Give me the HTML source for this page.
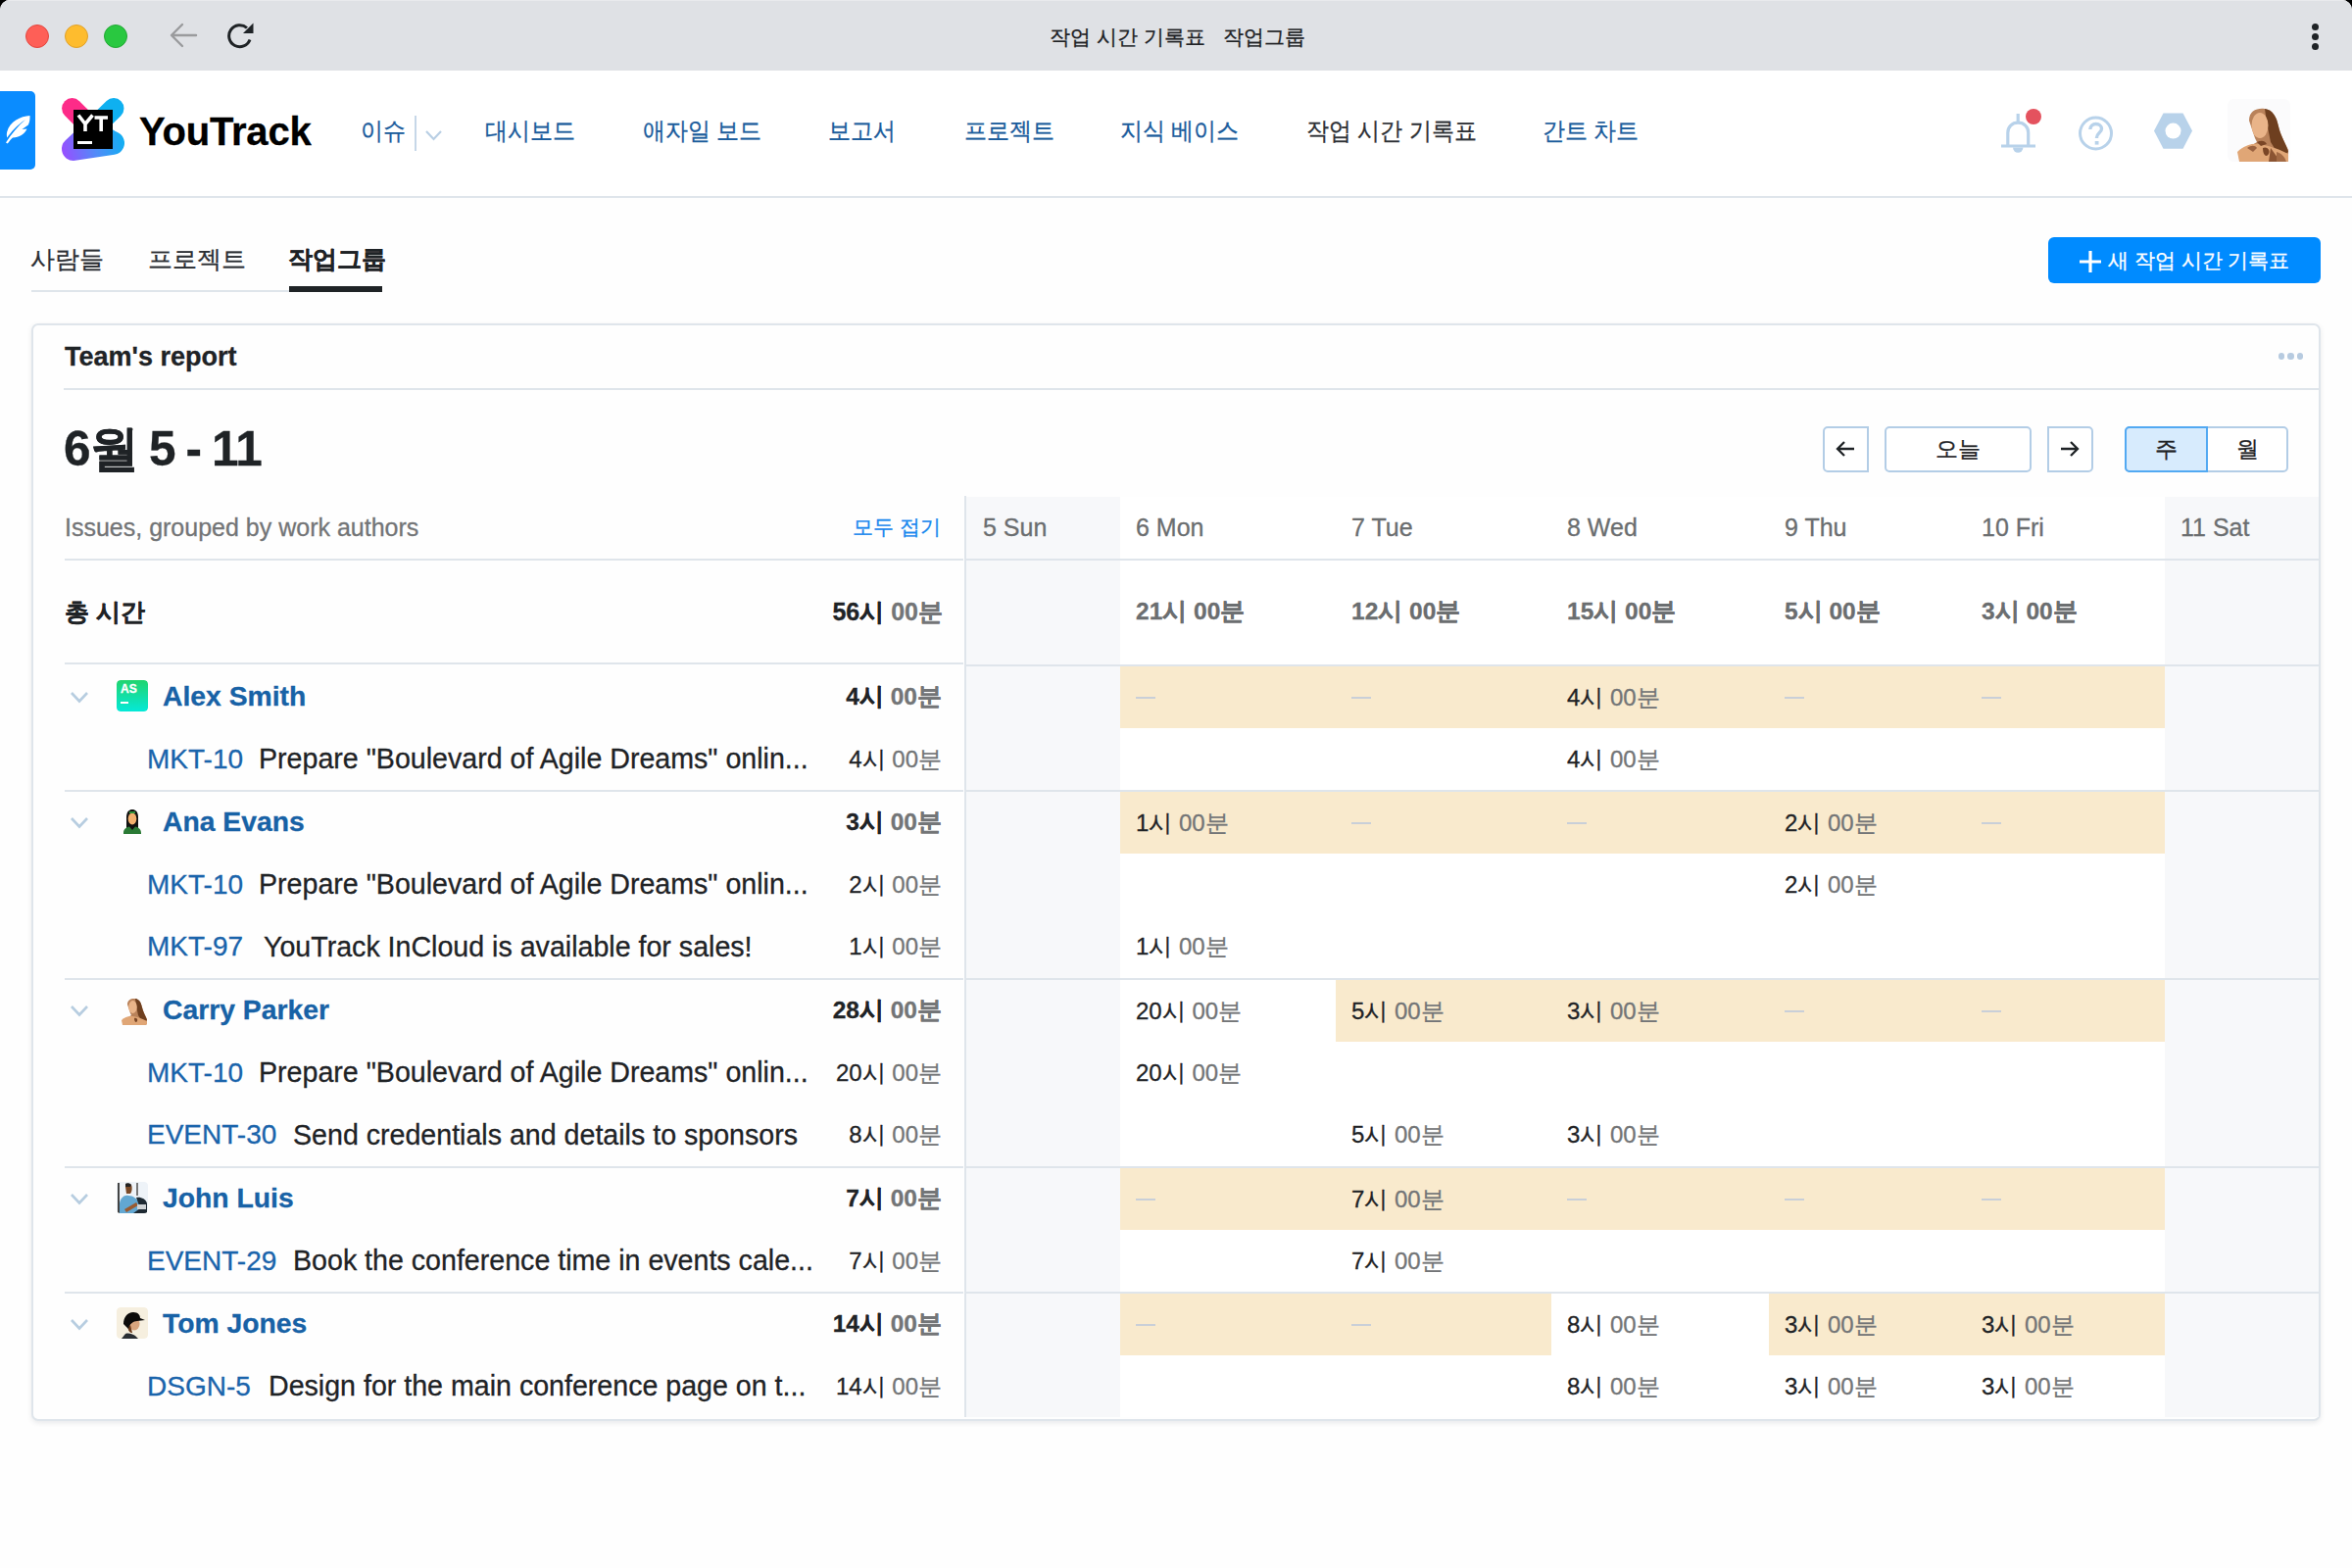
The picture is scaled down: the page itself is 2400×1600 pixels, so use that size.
<!DOCTYPE html>
<html><head><meta charset="utf-8">
<style>
*{box-sizing:border-box;margin:0;padding:0}
html,body{width:2400px;height:1600px;overflow:hidden;background:#000}
body{font-family:"Liberation Sans",sans-serif;color:#1f2326;position:relative;-webkit-text-stroke:0.3px currentColor}
.a{position:absolute;white-space:pre}
#win{position:absolute;left:0;top:0;width:2400px;height:1600px;background:#fefefe;border-radius:10px 10px 0 0;overflow:hidden}
#chrome{position:absolute;left:0;top:0;width:2400px;height:72px;background:#dfe1e5;box-shadow:inset 0 1px 0 #e9eaed}
.tl{position:absolute;top:25px;width:24px;height:24px;border-radius:50%}
.nav{font-size:25px;color:#1b5c9c;top:116px;line-height:34px;transform:scaleX(0.92);transform-origin:0 50%}
.tab{font-size:24.5px;color:#2b2e33;top:248px;line-height:34px}
.line{position:absolute;background:#dfe5eb}
</style></head><body>
<div id="win">
  <div id="chrome">
    <div class="tl" style="left:26px;background:#fe5f57;border:1px solid #e2463f"></div>
    <div class="tl" style="left:66px;background:#febc2e;border:1px solid #e0a12a"></div>
    <div class="tl" style="left:106px;background:#29c840;border:1px solid #22a834"></div>
    <svg class="a" style="left:172px;top:21px" width="32" height="30" viewBox="0 0 32 30"><path d="M28 15H4M14 4L3 15L14 26" fill="none" stroke="#9a9b9d" stroke-width="2.4" stroke-linecap="round" stroke-linejoin="round"/></svg>
    <svg class="a" style="left:230px;top:21px" width="32" height="30" viewBox="0 0 32 30"><path d="M25 19.5A11 11 0 1 1 22 7.5" fill="none" stroke="#1f2326" stroke-width="3"/><path d="M28.5 2.5V13H18z" fill="#1f2326"/></svg>
    <div class="a" style="left:1071px;top:23px;font-size:21px;line-height:30px;color:#202124">작업 시간 기록표</div>
    <div class="a" style="left:1248px;top:23px;font-size:21px;line-height:30px;color:#202124">작업그룹</div>
    <div class="a" style="left:2358.5px;top:23.5px;width:7px;height:7px;border-radius:50%;background:#1f2326"></div>
    <div class="a" style="left:2358.5px;top:33.5px;width:7px;height:7px;border-radius:50%;background:#1f2326"></div>
    <div class="a" style="left:2358.5px;top:43.5px;width:7px;height:7px;border-radius:50%;background:#1f2326"></div>
  </div>
  <!-- HEADER -->
  <div class="a" style="left:0;top:72px;width:2400px;height:128px;background:#fff"></div>
  <div class="line" style="left:0;top:200px;width:2400px;height:2px"></div>
  <div class="a" style="left:0;top:93px;width:36px;height:80px;background:#0a8cff;border-radius:0 5px 5px 0"></div>
  <svg class="a" style="left:4px;top:116px" width="30" height="32" viewBox="0 0 30 32">
  <path d="M26.5 2C17 2.5 6 8 3.2 18.5C2.6 21 2.8 23 3.4 24.5C7 19 13 12 22 6C14.5 12.5 8 20 2 29.5L3.8 30.5C6 27.5 7.5 25.8 9 24.5C15.5 24.5 21 21 23.5 15.5L18.5 16L24.8 11.5C26.3 8.5 26.8 5 26.5 2Z" fill="#fff"/>
</svg>
  <svg class="a" style="left:58px;top:95px" width="74" height="74" viewBox="0 0 74 74">
  <defs><linearGradient id="lg" x1="5" y1="65" x2="68" y2="50" gradientUnits="userSpaceOnUse"><stop offset="0" stop-color="#9b4cff"/><stop offset="0.55" stop-color="#4f8cf8"/><stop offset="1" stop-color="#13aef2"/></linearGradient></defs>
  <path d="M15.6 15.6L30 30" stroke="#fd2b88" stroke-width="21" stroke-linecap="round"/>
  <path d="M58 15.6L38 35L57 51" fill="none" stroke="#0fb0f0" stroke-width="21" stroke-linecap="round" stroke-linejoin="round"/>
  <path d="M17 57L35 40L57 51Z" fill="url(#lg)" stroke="url(#lg)" stroke-width="24" stroke-linejoin="round"/>
  <rect x="17" y="17" width="40" height="40" fill="#000"/>
  <path d="M22 22.5L29 31.5V39M36.5 22.5L29 31.5M38.5 25H52M45.2 25V39" fill="none" stroke="#fff" stroke-width="3.6"/>
  <rect x="21" y="49" width="15" height="3" fill="#fff"/>
</svg>
  <div class="a" style="left:142px;top:110px;font-size:40px;font-weight:bold;line-height:48px;color:#000;letter-spacing:-0.2px">YouTrack</div>
  <div class="a nav" style="left:368px">이슈</div>
  <div class="a" style="left:423px;top:118px;width:2px;height:36px;background:#c6d7e8"></div>
  <svg class="a" style="left:433px;top:131px" width="19" height="14" viewBox="0 0 19 14"><path d="M2 3L9.5 11L17 3" fill="none" stroke="#b9cfe4" stroke-width="2.2"/></svg>
  <div class="a nav" style="left:495px">대시보드</div>
  <div class="a nav" style="left:656px">애자일 보드</div>
  <div class="a nav" style="left:845px">보고서</div>
  <div class="a nav" style="left:984px">프로젝트</div>
  <div class="a nav" style="left:1143px">지식 베이스</div>
  <div class="a nav" style="left:1333px;color:#2d3035">작업 시간 기록표</div>
  <div class="a nav" style="left:1574px">간트 차트</div>
  <svg class="a" style="left:2038px;top:110px" width="52" height="50" viewBox="0 0 52 50">
  <path d="M21.2 6V15M4 39H39M10.8 38V25.5C10.8 19.5 15 15.2 21.2 15.2C27.4 15.2 31.7 19.5 31.7 25.5V38" fill="none" stroke="#b8d2ea" stroke-width="3.2"/>
  <path d="M16 40.5A5.2 5.2 0 0 0 26.4 40.5Z" fill="#b8d2ea"/>
  <circle cx="37" cy="9" r="8" fill="#e4525e"/>
</svg>
<svg class="a" style="left:2119px;top:116px" width="40" height="40" viewBox="0 0 40 40">
  <circle cx="19.5" cy="20" r="16" fill="none" stroke="#b8d2ea" stroke-width="3"/>
  <path d="M13.8 16C14 12.5 16.5 10.5 19.7 10.5C23 10.5 25.5 12.7 25.5 15.5C25.5 19 20.5 20 20.5 24.5V25" fill="none" stroke="#b8d2ea" stroke-width="3.4"/>
  <rect x="18.7" y="28" width="3.8" height="3.6" fill="#b8d2ea"/>
</svg>
<svg class="a" style="left:2196px;top:113px" width="44" height="42" viewBox="0 0 44 42">
  <path d="M2 20.6L11.5 2.5H31.5L41 20.6L31.5 38.8H11.5Z" fill="#b8d2ea"/>
  <circle cx="21.5" cy="20.6" r="8" fill="#fff"/>
</svg>
<svg class="a" style="left:2273px;top:101px" width="64" height="64" viewBox="0 0 64 64">
  <rect x="0" y="0" width="64" height="64" rx="6" fill="#fbfbfc"/>
  <path d="M22 22C22 12 30 9 38 10C46 11 50 18 52 28C54 36 58 44 62 52V64H16V56C20 50 26 46 30 44L28 40Z" fill="#b9825a"/>
  <path d="M38 10C46 11 50 18 52 28C54 38 60 46 62 54L54 60L44 44L40 24Z" fill="#6e3f1f"/>
  <ellipse cx="33" cy="27" rx="8.5" ry="13" fill="#e9b489"/>
  <path d="M10 54C16 48 24 45 32 46C40 47 50 50 62 56V64H12Z" fill="#e0a676"/>
  <path d="M36 50C40 48 44 52 42 56C40 60 36 58 36 50Z" fill="#7a4626"/>
  <path d="M44 50L54 64H42Z" fill="#8b5432"/><path d="M20 50C24 47 28 47 30 50L26 54Z" fill="#9a6240"/><path d="M50 54C54 55 58 58 60 64H50Z" fill="#a46b45"/><path d="M30 44C34 42 38 42 40 46L34 48Z" fill="#7a4626"/>
</svg>
  <!-- TABS -->
  <div class="a tab" style="left:31px">사람들</div>
  <div class="a tab" style="left:151px">프로젝트</div>
  <div class="a tab" style="left:294px;font-weight:bold;color:#1f2326">작업그룹</div>
  <div class="line" style="left:32px;top:296px;width:263px;height:2px"></div>
  <div class="a" style="left:295px;top:292px;width:95px;height:6px;background:#1f2326"></div>
  <div class="a" style="left:2090px;top:242px;width:278px;height:47px;background:#008bff;border-radius:6px"></div>
  <svg class="a" style="left:2121px;top:255px" width="24" height="24" viewBox="0 0 24 24"><path d="M12 1V23M1 12H23" stroke="#fff" stroke-width="3.2"/></svg>
  <div class="a" style="left:2151px;top:249px;font-size:20.8px;line-height:34px;color:#fff">새 작업 시간 기록표</div>
  <!-- CARD -->
<div class="a" style="left:32px;top:330px;width:2336px;height:1120px;border:2px solid #dfe5eb;border-radius:7px;background:#fefefe;box-shadow:0 2px 5px rgba(40,50,70,0.10)"></div>
<div class="a" style="left:66px;top:340px;line-height:48px;font-size:27px;color:#1f2326;font-weight:bold;">Team's report</div>
<div class="a" style="left:2324.5px;top:360px;width:6.5px;height:6.5px;border-radius:50%;background:#b7cbe0"></div>
<div class="a" style="left:2334.0px;top:360px;width:6.5px;height:6.5px;border-radius:50%;background:#b7cbe0"></div>
<div class="a" style="left:2343.5px;top:360px;width:6.5px;height:6.5px;border-radius:50%;background:#b7cbe0"></div>
<div class="a" style="left:65px;top:396px;width:2301px;height:2px;background:#dfe5eb"></div>
<div class="a" style="left:65px;top:428px;line-height:60px;font-size:49.5px;color:#1f2326;font-weight:bold;letter-spacing:-0.6px;word-spacing:-2.5px">6월 5 - 11</div>
<div class="a" style="left:1860px;top:435px;width:47px;height:47px;border:2px solid #b3cde6;border-radius:5px 0 0 5px;background:#fff"></div>
<svg class="a" style="left:1872px;top:448px" width="22" height="20" viewBox="0 0 22 20"><path d="M20 10H3M10 3L3 10L10 17" fill="none" stroke="#1f2326" stroke-width="2.3"/></svg>
<div class="a" style="left:1923px;top:435px;width:150px;height:47px;border:2px solid #b3cde6;border-radius:5px;background:#fff"></div>
<div class="a" style="left:1923px;top:435px;line-height:47px;font-size:23px;color:#1f2326;width:150px;text-align:center">오늘</div>
<div class="a" style="left:2089px;top:435px;width:47px;height:47px;border:2px solid #b3cde6;border-radius:0 5px 5px 0;background:#fff"></div>
<svg class="a" style="left:2101px;top:448px" width="22" height="20" viewBox="0 0 22 20"><path d="M2 10H19M12 3L19 10L12 17" fill="none" stroke="#1f2326" stroke-width="2.3"/></svg>
<div class="a" style="left:2168px;top:435px;width:167px;height:47px;border:2px solid #b3cde6;border-radius:5px;background:#fff"></div>
<div class="a" style="left:2168px;top:435px;width:85px;height:47px;border:2px solid #52a9f2;border-radius:5px 0 0 5px;background:#d7ebfd"></div>
<div class="a" style="left:2168px;top:435px;line-height:47px;font-size:23px;color:#1f2326;width:85px;text-align:center">주</div>
<div class="a" style="left:2252px;top:435px;line-height:47px;font-size:23px;color:#1f2326;width:83px;text-align:center">월</div>
<div class="a" style="left:986px;top:507px;width:157px;height:939px;background:#f7f8fa"></div>
<div class="a" style="left:2209px;top:507px;width:157px;height:939px;background:#f7f8fa"></div>
<div class="a" style="left:1143px;top:507px;width:1066px;height:939px;background:#fff"></div>
<div class="a" style="left:984px;top:506px;width:2px;height:940px;background:#dfe5eb"></div>
<div class="a" style="left:66px;top:518px;line-height:40px;font-size:25px;color:#737577;">Issues, grouped by work authors</div>
<div class="a" style="right:1440px;top:518px;line-height:40px;font-size:21.3px;color:#1787ee;text-align:right;">모두 접기</div>
<div class="a" style="left:1003px;top:518px;line-height:40px;font-size:25px;color:#6b6e70;">5 Sun</div>
<div class="a" style="left:1159px;top:518px;line-height:40px;font-size:25px;color:#6b6e70;">6 Mon</div>
<div class="a" style="left:1379px;top:518px;line-height:40px;font-size:25px;color:#6b6e70;">7 Tue</div>
<div class="a" style="left:1599px;top:518px;line-height:40px;font-size:25px;color:#6b6e70;">8 Wed</div>
<div class="a" style="left:1821px;top:518px;line-height:40px;font-size:25px;color:#6b6e70;">9 Thu</div>
<div class="a" style="left:2022px;top:518px;line-height:40px;font-size:25px;color:#6b6e70;">10 Fri</div>
<div class="a" style="left:2225px;top:518px;line-height:40px;font-size:25px;color:#6b6e70;">11 Sat</div>
<div class="a" style="left:66px;top:570px;width:917px;height:2px;background:#dfe5eb"></div>
<div class="a" style="left:986px;top:570px;width:1380px;height:2px;background:#dfe5eb"></div>
<div class="a" style="left:66px;top:600px;line-height:48px;font-size:25px;color:#1f2326;font-weight:bold;">총 시간</div>
<div class="a" style="right:1438px;top:600px;line-height:48px;font-size:25px;color:#1f2326;font-weight:bold;text-align:right;">56시 <span style="color:#737577">00분</span></div>
<div class="a" style="left:1159px;top:600px;line-height:48px;font-size:24.5px;color:#6b6e70;font-weight:bold;">21시 00분</div>
<div class="a" style="left:1379px;top:600px;line-height:48px;font-size:24.5px;color:#6b6e70;font-weight:bold;">12시 00분</div>
<div class="a" style="left:1599px;top:600px;line-height:48px;font-size:24.5px;color:#6b6e70;font-weight:bold;">15시 00분</div>
<div class="a" style="left:1821px;top:600px;line-height:48px;font-size:24.5px;color:#6b6e70;font-weight:bold;">5시 00분</div>
<div class="a" style="left:2022px;top:600px;line-height:48px;font-size:24.5px;color:#6b6e70;font-weight:bold;">3시 00분</div>
<div class="a" style="left:66px;top:676px;width:917px;height:2px;background:#dfe5eb"></div>
<div class="a" style="left:986px;top:678px;width:1380px;height:2px;background:#dfe5eb"></div>
<div class="a" style="left:1143px;top:680px;width:220px;height:63px;background:#f9eacd"></div>
<div class="a" style="left:1363px;top:680px;width:220px;height:63px;background:#f9eacd"></div>
<div class="a" style="left:1583px;top:680px;width:222px;height:63px;background:#f9eacd"></div>
<div class="a" style="left:1805px;top:680px;width:201px;height:63px;background:#f9eacd"></div>
<div class="a" style="left:2006px;top:680px;width:203px;height:63px;background:#f9eacd"></div>
<svg class="a" style="left:71px;top:705px" width="20" height="13" viewBox="0 0 20 13"><path d="M2 2L10 10.5L18 2" fill="none" stroke="#b7cde0" stroke-width="2.6"/></svg>
<div class="a avatar0" style="left:119px;top:694px;width:32px;height:32px;border-radius:4px;overflow:hidden"><div class="a" style="left:0;top:0;width:32px;height:32px;border-radius:4px;background:linear-gradient(180deg,#21d46e,#04e9d8)"></div><div class="a" style="left:4px;top:1px;font-size:12px;line-height:16px;font-weight:bold;color:#fff">AS</div><div class="a" style="left:4px;top:22px;width:8px;height:2px;background:#fff"></div></div>
<div class="a" style="left:166px;top:679px;line-height:63px;font-size:28.3px;color:#1862a6;font-weight:bold;">Alex Smith</div>
<div class="a" style="right:1439px;top:679px;line-height:63px;font-size:24.5px;color:#1f2326;font-weight:bold;text-align:right;">4시 <span style="color:#737577">00분</span></div>
<div class="a" style="left:1159px;top:711px;width:20px;height:2px;background:#c9cfd8"></div>
<div class="a" style="left:1379px;top:711px;width:20px;height:2px;background:#c9cfd8"></div>
<div class="a" style="left:1599px;top:680px;line-height:63px;font-size:24px;color:#1f2326;">4시 <span style="color:#737577">00분</span></div>
<div class="a" style="left:1821px;top:711px;width:20px;height:2px;background:#c9cfd8"></div>
<div class="a" style="left:2022px;top:711px;width:20px;height:2px;background:#c9cfd8"></div>
<div class="a" style="left:150px;top:743px;line-height:63px;font-size:28px;color:#1a64ab;">MKT-10</div>
<div class="a" style="left:264px;top:743px;line-height:63px;font-size:28.6px;color:#1f2326;">Prepare "Boulevard of Agile Dreams" onlin...</div>
<div class="a" style="right:1439px;top:743px;line-height:63px;font-size:24px;color:#1f2326;text-align:right;">4시 <span style="color:#737577">00분</span></div>
<div class="a" style="left:1599px;top:743px;line-height:63px;font-size:24px;color:#1f2326;">4시 <span style="color:#737577">00분</span></div>
<div class="a" style="left:66px;top:806px;width:917px;height:2px;background:#dfe5eb"></div>
<div class="a" style="left:986px;top:806px;width:1380px;height:2px;background:#dfe5eb"></div>
<div class="a" style="left:1143px;top:808px;width:220px;height:63px;background:#f9eacd"></div>
<div class="a" style="left:1363px;top:808px;width:220px;height:63px;background:#f9eacd"></div>
<div class="a" style="left:1583px;top:808px;width:222px;height:63px;background:#f9eacd"></div>
<div class="a" style="left:1805px;top:808px;width:201px;height:63px;background:#f9eacd"></div>
<div class="a" style="left:2006px;top:808px;width:203px;height:63px;background:#f9eacd"></div>
<svg class="a" style="left:71px;top:833px" width="20" height="13" viewBox="0 0 20 13"><path d="M2 2L10 10.5L18 2" fill="none" stroke="#b7cde0" stroke-width="2.6"/></svg>
<div class="a avatar1" style="left:119px;top:822px;width:32px;height:32px;border-radius:4px;overflow:hidden"><svg class="a" style="left:0;top:0" width="32" height="32" viewBox="0 0 32 32"><path d="M10 26V12C10 6 13 4 16 4C19 4 22 6 22 12V26Z" fill="#111"/><ellipse cx="16" cy="13.5" rx="4.3" ry="6" fill="#f2b06e"/><path d="M7 28C7 24 10 22 13 21.5L16 25L19 21.5C22 22 25 24 25 28V29H7Z" fill="#2a7a35"/><rect x="13" y="6" width="6" height="2" fill="#2f8f3a"/></svg></div>
<div class="a" style="left:166px;top:807px;line-height:63px;font-size:28.3px;color:#1862a6;font-weight:bold;">Ana Evans</div>
<div class="a" style="right:1439px;top:807px;line-height:63px;font-size:24.5px;color:#1f2326;font-weight:bold;text-align:right;">3시 <span style="color:#737577">00분</span></div>
<div class="a" style="left:1159px;top:808px;line-height:63px;font-size:24px;color:#1f2326;">1시 <span style="color:#737577">00분</span></div>
<div class="a" style="left:1379px;top:839px;width:20px;height:2px;background:#c9cfd8"></div>
<div class="a" style="left:1599px;top:839px;width:20px;height:2px;background:#c9cfd8"></div>
<div class="a" style="left:1821px;top:808px;line-height:63px;font-size:24px;color:#1f2326;">2시 <span style="color:#737577">00분</span></div>
<div class="a" style="left:2022px;top:839px;width:20px;height:2px;background:#c9cfd8"></div>
<div class="a" style="left:150px;top:871px;line-height:63px;font-size:28px;color:#1a64ab;">MKT-10</div>
<div class="a" style="left:264px;top:871px;line-height:63px;font-size:28.6px;color:#1f2326;">Prepare "Boulevard of Agile Dreams" onlin...</div>
<div class="a" style="right:1439px;top:871px;line-height:63px;font-size:24px;color:#1f2326;text-align:right;">2시 <span style="color:#737577">00분</span></div>
<div class="a" style="left:1821px;top:871px;line-height:63px;font-size:24px;color:#1f2326;">2시 <span style="color:#737577">00분</span></div>
<div class="a" style="left:150px;top:934px;line-height:64px;font-size:28px;color:#1a64ab;">MKT-97</div>
<div class="a" style="left:269px;top:934px;line-height:64px;font-size:28.6px;color:#1f2326;">YouTrack InCloud is available for sales!</div>
<div class="a" style="right:1439px;top:934px;line-height:64px;font-size:24px;color:#1f2326;text-align:right;">1시 <span style="color:#737577">00분</span></div>
<div class="a" style="left:1159px;top:934px;line-height:64px;font-size:24px;color:#1f2326;">1시 <span style="color:#737577">00분</span></div>
<div class="a" style="left:66px;top:998px;width:917px;height:2px;background:#dfe5eb"></div>
<div class="a" style="left:986px;top:998px;width:1380px;height:2px;background:#dfe5eb"></div>
<div class="a" style="left:1363px;top:1000px;width:220px;height:63px;background:#f9eacd"></div>
<div class="a" style="left:1583px;top:1000px;width:222px;height:63px;background:#f9eacd"></div>
<div class="a" style="left:1805px;top:1000px;width:201px;height:63px;background:#f9eacd"></div>
<div class="a" style="left:2006px;top:1000px;width:203px;height:63px;background:#f9eacd"></div>
<svg class="a" style="left:71px;top:1025px" width="20" height="13" viewBox="0 0 20 13"><path d="M2 2L10 10.5L18 2" fill="none" stroke="#b7cde0" stroke-width="2.6"/></svg>
<div class="a avatar2" style="left:119px;top:1014px;width:32px;height:32px;border-radius:4px;overflow:hidden"><svg class="a" style="left:0;top:0" width="32" height="32" viewBox="0 0 64 64"><path d="M22 22C22 12 30 9 38 10C46 11 50 18 52 28C54 36 58 44 62 52V64H16V56C20 50 26 46 30 44L28 40Z" fill="#b9825a"/><path d="M38 10C46 11 50 18 52 28C54 38 60 46 62 54L54 60L44 44L40 24Z" fill="#6e3f1f"/><ellipse cx="33" cy="27" rx="8.5" ry="13" fill="#e9b489"/><path d="M10 54C16 48 24 45 32 46C40 47 50 50 62 56V64H12Z" fill="#e0a676"/><path d="M36 50C40 48 44 52 42 56C40 60 36 58 36 50Z" fill="#7a4626"/></svg></div>
<div class="a" style="left:166px;top:999px;line-height:63px;font-size:28.3px;color:#1862a6;font-weight:bold;">Carry Parker</div>
<div class="a" style="right:1439px;top:999px;line-height:63px;font-size:24.5px;color:#1f2326;font-weight:bold;text-align:right;">28시 <span style="color:#737577">00분</span></div>
<div class="a" style="left:1159px;top:1000px;line-height:63px;font-size:24px;color:#1f2326;">20시 <span style="color:#737577">00분</span></div>
<div class="a" style="left:1379px;top:1000px;line-height:63px;font-size:24px;color:#1f2326;">5시 <span style="color:#737577">00분</span></div>
<div class="a" style="left:1599px;top:1000px;line-height:63px;font-size:24px;color:#1f2326;">3시 <span style="color:#737577">00분</span></div>
<div class="a" style="left:1821px;top:1031px;width:20px;height:2px;background:#c9cfd8"></div>
<div class="a" style="left:2022px;top:1031px;width:20px;height:2px;background:#c9cfd8"></div>
<div class="a" style="left:150px;top:1063px;line-height:63px;font-size:28px;color:#1a64ab;">MKT-10</div>
<div class="a" style="left:264px;top:1063px;line-height:63px;font-size:28.6px;color:#1f2326;">Prepare "Boulevard of Agile Dreams" onlin...</div>
<div class="a" style="right:1439px;top:1063px;line-height:63px;font-size:24px;color:#1f2326;text-align:right;">20시 <span style="color:#737577">00분</span></div>
<div class="a" style="left:1159px;top:1063px;line-height:63px;font-size:24px;color:#1f2326;">20시 <span style="color:#737577">00분</span></div>
<div class="a" style="left:150px;top:1126px;line-height:64px;font-size:28px;color:#1a64ab;">EVENT-30</div>
<div class="a" style="left:299px;top:1126px;line-height:64px;font-size:28.6px;color:#1f2326;">Send credentials and details to sponsors</div>
<div class="a" style="right:1439px;top:1126px;line-height:64px;font-size:24px;color:#1f2326;text-align:right;">8시 <span style="color:#737577">00분</span></div>
<div class="a" style="left:1379px;top:1126px;line-height:64px;font-size:24px;color:#1f2326;">5시 <span style="color:#737577">00분</span></div>
<div class="a" style="left:1599px;top:1126px;line-height:64px;font-size:24px;color:#1f2326;">3시 <span style="color:#737577">00분</span></div>
<div class="a" style="left:66px;top:1190px;width:917px;height:2px;background:#dfe5eb"></div>
<div class="a" style="left:986px;top:1190px;width:1380px;height:2px;background:#dfe5eb"></div>
<div class="a" style="left:1143px;top:1192px;width:220px;height:63px;background:#f9eacd"></div>
<div class="a" style="left:1363px;top:1192px;width:220px;height:63px;background:#f9eacd"></div>
<div class="a" style="left:1583px;top:1192px;width:222px;height:63px;background:#f9eacd"></div>
<div class="a" style="left:1805px;top:1192px;width:201px;height:63px;background:#f9eacd"></div>
<div class="a" style="left:2006px;top:1192px;width:203px;height:63px;background:#f9eacd"></div>
<svg class="a" style="left:71px;top:1217px" width="20" height="13" viewBox="0 0 20 13"><path d="M2 2L10 10.5L18 2" fill="none" stroke="#b7cde0" stroke-width="2.6"/></svg>
<div class="a avatar3" style="left:119px;top:1206px;width:32px;height:32px;border-radius:4px;overflow:hidden"><svg class="a" style="left:0;top:0" width="32" height="32" viewBox="0 0 32 32"><rect width="32" height="32" rx="3" fill="#eef3f8"/><rect x="1" y="1" width="2" height="31" fill="#444"/><rect x="20" y="1" width="2" height="13" fill="#777"/><path d="M9 5C9 2 13 1 15 3C16 5 16 10 14 12H10Z" fill="#7a4a28"/><path d="M9 2C10 1 14 1 15 3L14 5H9Z" fill="#222"/><path d="M3 32V22C4 16 8 13 12 14C17 14 21 17 23 22L22 32Z" fill="#62a7d2"/><path d="M8 28L20 21L22 24L10 31Z" fill="#9a5a30"/><path d="M20 16C24 15 30 17 31 22V32H17L24 27Z" fill="#1e2a33"/><rect x="21" y="23" width="9" height="5" fill="#cfd3d6"/></svg></div>
<div class="a" style="left:166px;top:1191px;line-height:63px;font-size:28.3px;color:#1862a6;font-weight:bold;">John Luis</div>
<div class="a" style="right:1439px;top:1191px;line-height:63px;font-size:24.5px;color:#1f2326;font-weight:bold;text-align:right;">7시 <span style="color:#737577">00분</span></div>
<div class="a" style="left:1159px;top:1223px;width:20px;height:2px;background:#c9cfd8"></div>
<div class="a" style="left:1379px;top:1192px;line-height:63px;font-size:24px;color:#1f2326;">7시 <span style="color:#737577">00분</span></div>
<div class="a" style="left:1599px;top:1223px;width:20px;height:2px;background:#c9cfd8"></div>
<div class="a" style="left:1821px;top:1223px;width:20px;height:2px;background:#c9cfd8"></div>
<div class="a" style="left:2022px;top:1223px;width:20px;height:2px;background:#c9cfd8"></div>
<div class="a" style="left:150px;top:1255px;line-height:63px;font-size:28px;color:#1a64ab;">EVENT-29</div>
<div class="a" style="left:299px;top:1255px;line-height:63px;font-size:28.6px;color:#1f2326;">Book the conference time in events cale...</div>
<div class="a" style="right:1439px;top:1255px;line-height:63px;font-size:24px;color:#1f2326;text-align:right;">7시 <span style="color:#737577">00분</span></div>
<div class="a" style="left:1379px;top:1255px;line-height:63px;font-size:24px;color:#1f2326;">7시 <span style="color:#737577">00분</span></div>
<div class="a" style="left:66px;top:1318px;width:917px;height:2px;background:#dfe5eb"></div>
<div class="a" style="left:986px;top:1318px;width:1380px;height:2px;background:#dfe5eb"></div>
<div class="a" style="left:1143px;top:1320px;width:220px;height:63px;background:#f9eacd"></div>
<div class="a" style="left:1363px;top:1320px;width:220px;height:63px;background:#f9eacd"></div>
<div class="a" style="left:1805px;top:1320px;width:201px;height:63px;background:#f9eacd"></div>
<div class="a" style="left:2006px;top:1320px;width:203px;height:63px;background:#f9eacd"></div>
<svg class="a" style="left:71px;top:1345px" width="20" height="13" viewBox="0 0 20 13"><path d="M2 2L10 10.5L18 2" fill="none" stroke="#b7cde0" stroke-width="2.6"/></svg>
<div class="a avatar4" style="left:119px;top:1334px;width:32px;height:32px;border-radius:4px;overflow:hidden"><svg class="a" style="left:0;top:0" width="32" height="32" viewBox="0 0 32 32"><rect width="32" height="32" rx="4" fill="#f6efdf"/><ellipse cx="18" cy="17" rx="5.5" ry="6.5" fill="#d9a57e"/><path d="M12 20C11 24 14 26 16 26L14 18Z" fill="#6b3a1a"/><path d="M7 17C7 10 11 5 17 5C22 5 24 8 24 11L29 13L21 14C17 14 13 17 12 22Z" fill="#0d0b0a"/><path d="M5 32L9 27C12 26 16 27 19 29L22 32Z" fill="#2a2e33"/></svg></div>
<div class="a" style="left:166px;top:1319px;line-height:63px;font-size:28.3px;color:#1862a6;font-weight:bold;">Tom Jones</div>
<div class="a" style="right:1439px;top:1319px;line-height:63px;font-size:24.5px;color:#1f2326;font-weight:bold;text-align:right;">14시 <span style="color:#737577">00분</span></div>
<div class="a" style="left:1159px;top:1351px;width:20px;height:2px;background:#c9cfd8"></div>
<div class="a" style="left:1379px;top:1351px;width:20px;height:2px;background:#c9cfd8"></div>
<div class="a" style="left:1599px;top:1320px;line-height:63px;font-size:24px;color:#1f2326;">8시 <span style="color:#737577">00분</span></div>
<div class="a" style="left:1821px;top:1320px;line-height:63px;font-size:24px;color:#1f2326;">3시 <span style="color:#737577">00분</span></div>
<div class="a" style="left:2022px;top:1320px;line-height:63px;font-size:24px;color:#1f2326;">3시 <span style="color:#737577">00분</span></div>
<div class="a" style="left:150px;top:1383px;line-height:63px;font-size:28px;color:#1a64ab;">DSGN-5</div>
<div class="a" style="left:274px;top:1383px;line-height:63px;font-size:28.6px;color:#1f2326;">Design for the main conference page on t...</div>
<div class="a" style="right:1439px;top:1383px;line-height:63px;font-size:24px;color:#1f2326;text-align:right;">14시 <span style="color:#737577">00분</span></div>
<div class="a" style="left:1599px;top:1383px;line-height:63px;font-size:24px;color:#1f2326;">8시 <span style="color:#737577">00분</span></div>
<div class="a" style="left:1821px;top:1383px;line-height:63px;font-size:24px;color:#1f2326;">3시 <span style="color:#737577">00분</span></div>
<div class="a" style="left:2022px;top:1383px;line-height:63px;font-size:24px;color:#1f2326;">3시 <span style="color:#737577">00분</span></div>
</div>
</body></html>
